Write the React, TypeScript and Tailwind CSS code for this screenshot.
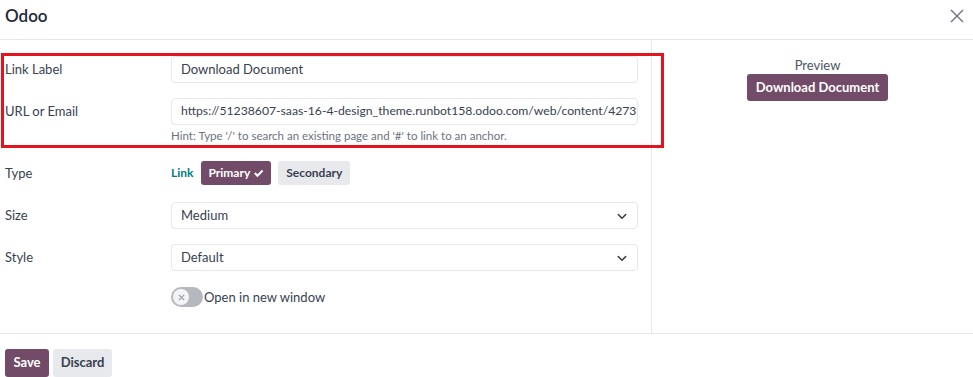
import React from "react";

const font = { fontFamily: 'Lato, "Noto Sans", sans-serif' };

function Chevron() {
  return (
    <svg width="12" height="12" viewBox="0 0 16 16" fill="none" stroke="#343a40" strokeWidth="2" strokeLinecap="round" strokeLinejoin="round">
      <path d="M3 6l5 5 5-5" />
    </svg>
  );
}

export default function App() {
  return (
    <div className="w-[973px] h-[377px] bg-white text-[#374151] overflow-hidden relative" style={font}>
      {/* header */}
      <div className="h-[40px] flex items-start justify-between px-[5px] pt-[6px] border-b border-[#e5e7eb]">
        <div className="text-[17px] font-semibold text-[#1f2937] leading-[20px]">Odoo</div>
        <svg width="14" height="14" viewBox="0 0 14 14" stroke="#6b7280" strokeWidth="1.4" className="mr-[4px] mt-[3px]">
          <path d="M1 1l12 12M13 1L1 13" />
        </svg>
      </div>

      {/* body */}
      <div className="flex h-[293px]">
        <div className="w-[652px] border-r border-[#e5e7eb] pt-[16px] pr-[13px] relative">
          <div className="absolute left-[1px] top-[13px] w-[663px] h-[95px] border-[3px] border-[#e3141e] pointer-events-none" />
          <div className="flex items-center h-[27px]">
            <div className="w-[171px] pl-[5px] text-[13px]">Link Label</div>
            <div className="flex-1 h-[27px] border border-[#e5e7eb] rounded-[4px] flex items-center px-[9px] text-[13px]">Download Document</div>
          </div>
          <div className="flex items-center h-[27px] mt-[15px]">
            <div className="w-[171px] pl-[5px] text-[13px]">URL or Email</div>
            <div className="flex-1 h-[27px] border border-[#e5e7eb] rounded-[4px] flex items-center px-[9px] text-[12.2px] whitespace-nowrap overflow-hidden">https://51238607-saas-16-4-design_theme.runbot158.odoo.com/web/content/4273</div>
          </div>
          <div className="pl-[171px] mt-[2px] text-[11.5px] text-[#6b7280]">Hint: Type '/' to search an existing page and '#' to link to an anchor.</div>

          <div className="flex items-center h-[24px] mt-[17px]">
            <div className="w-[171px] pl-[5px] text-[13px]">Type</div>
            <div className="flex items-center gap-[7px]">
              <span className="text-[12px] font-bold text-[#017e84] mr-[1px]">Link</span>
              <div className="h-[24px] px-[7px] rounded-[3px] bg-[#714b67] text-white text-[12px] font-bold flex items-center gap-[3px]">
                Primary
                <svg width="11" height="11" viewBox="0 0 16 16" fill="white"><path d="M1.5 8.5l2.2-2.2 2.8 2.8 6.3-6.6 2.2 2.2-8.5 8.8z" /></svg>
              </div>
              <div className="h-[24px] px-[8px] rounded-[3px] bg-[#e7e9ed] text-[#374151] text-[12px] font-bold flex items-center">Secondary</div>
            </div>
          </div>

          <div className="flex items-center h-[27px] mt-[17px]">
            <div className="w-[171px] pl-[5px] text-[13px]">Size</div>
            <div className="flex-1 h-[27px] border border-[#e5e7eb] rounded-[4px] flex items-center justify-between pl-[9px] pr-[9px] text-[13px]">
              <span>Medium</span>
              <Chevron />
            </div>
          </div>
          <div className="flex items-center h-[27px] mt-[15px]">
            <div className="w-[171px] pl-[5px] text-[13px]">Style</div>
            <div className="flex-1 h-[27px] border border-[#e5e7eb] rounded-[4px] flex items-center justify-between pl-[9px] pr-[9px] text-[13px]">
              <span>Default</span>
              <Chevron />
            </div>
          </div>
          <div className="flex items-center h-[20px] mt-[16px] pl-[171px]">
            <div className="w-[32px] h-[20px] rounded-full bg-[#b5b8bd] relative">
              <div className="absolute left-[2px] top-[2px] w-[16px] h-[16px] rounded-full bg-[#f3f4f6] flex items-center justify-center">
                <svg width="7" height="7" viewBox="0 0 8 8" stroke="#9ca3af" strokeWidth="1.6"><path d="M1 1l6 6M7 1L1 7" /></svg>
              </div>
            </div>
            <span className="text-[13px] ml-[1px]">Open in new window</span>
          </div>
        </div>
        <div className="flex-1 flex flex-col items-center pt-[17px] pl-[10px]">
          <div className="text-[13px] text-[#4b5563] leading-[16px]">Preview</div>
          <div className="mt-[1px] h-[27px] px-[9px] rounded-[3px] bg-[#714b67] text-white text-[13px] font-bold flex items-center">Download Document</div>
        </div>
      </div>

      {/* footer */}
      <div className="border-t border-[#e5e7eb] pt-[15px] pl-[5px] flex gap-[4px]">
        <div className="h-[28px] w-[44px] rounded-[3px] bg-[#714b67] text-white text-[13px] font-bold flex items-center justify-center">Save</div>
        <div className="h-[28px] w-[59px] rounded-[3px] bg-[#e7e9ed] text-[#374151] text-[13px] font-bold flex items-center justify-center">Discard</div>
      </div>
    </div>
  );
}
